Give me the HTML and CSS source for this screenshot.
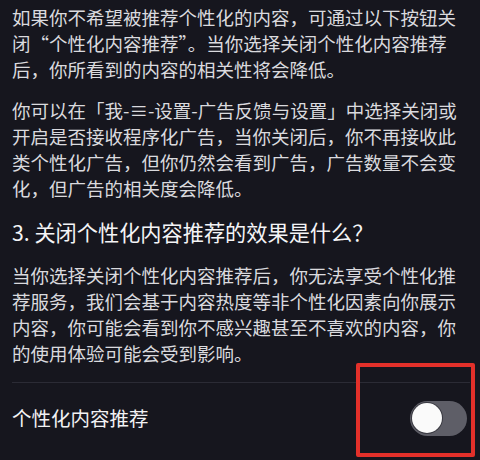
FILE: index.html
```html
<!DOCTYPE html>
<html lang="zh-CN">
<head>
<meta charset="utf-8">
<link rel="stylesheet" href="styles.css">
</head>
<body>
<div class="page">
  <div class="article">
    <p class="para">如果你不希望被推荐个性化的内容，可通过以下按钮关闭“个性化内容推荐”。当你选择关闭个性化内容推荐后，你所看到的内容的相关性将会降低。</p>
    <p class="para gap">你可以在「我-≡-设置-广告反馈与设置」中选择关闭或开启是否接收程序化广告，当你关闭后，你不再接收此类个性化广告，但你仍然会看到广告，广告数量不会变化，但广告的相关度会降低。</p>
    <h2 class="heading">3. 关闭个性化内容推荐的效果是什么？</h2>
    <p class="para">当你选择关闭个性化内容推荐后，你无法享受个性化推荐服务，我们会基于内容热度等非个性化因素向你展示内容，你可能会看到你不感兴趣甚至不喜欢的内容，你的使用体验可能会受到影响。</p>
  </div>
  <div class="divider"></div>
  <div class="setting-row">
    <span class="setting-label">个性化内容推荐</span>
    <span class="switch"><span class="knob"></span></span>
  </div>
  <div class="highlight"></div>
</div>
</body>
</html>
```

FILE: styles.css
```css
html, body {
  margin: 0;
  padding: 0;
  background: #16161e;
}
.page {
  position: relative;
  width: 480px;
  height: 460px;
  overflow: hidden;
  font-family: "Noto Sans CJK SC", "Noto Sans", sans-serif;
}
.article {
  padding: 4px 10px 0 12px;
}
.para {
  margin: 0;
  font-size: 18.5px;
  line-height: 26px;
  color: #dadade;
}
.para.gap {
  margin-top: 15px;
}
.heading {
  margin: 17px 0 16px 0;
  font-size: 21.2px;
  line-height: 28px;
  font-weight: 400;
  color: #f4f4f6;
}
.divider {
  height: 1px;
  background: #2b2b35;
  margin: 16px 10px 0 12px;
}
.setting-row {
  display: flex;
  align-items: center;
  justify-content: space-between;
  padding: 17px 13px 0 12px;
}
.setting-label {
  font-size: 19.5px;
  line-height: 36px;
  color: #f2f2f4;
}
.switch {
  display: flex;
  align-items: center;
  width: 57px;
  height: 35px;
  border-radius: 18px;
  background: #5e5e67;
  box-sizing: border-box;
  padding-left: 2px;
}
.knob {
  width: 30px;
  height: 30px;
  border-radius: 50%;
  background: #fafafa;
  box-shadow: 0 0 0 1px #3a3a42;
}
.highlight {
  position: absolute;
  left: 356px;
  top: 363px;
  width: 119px;
  height: 94px;
  box-sizing: border-box;
  border: 4px solid #e3302a;
  border-radius: 2px;
}
```
